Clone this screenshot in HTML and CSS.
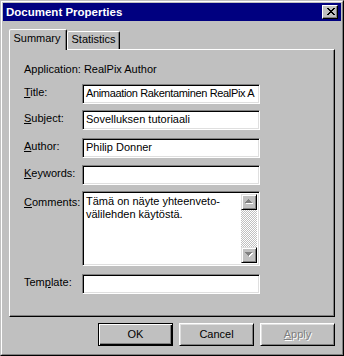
FILE: index.html
```html
<!DOCTYPE html>
<html>
<head>
<meta charset="utf-8">
<link rel="stylesheet" href="styles.css">
</head>
<body>
<div class="window">
  <div class="frame">
    <div class="titlebar">
      <span class="title">Document Properties</span>
      <div class="close">
        <svg width="8" height="7" viewBox="0 0 8 7" shape-rendering="crispEdges"><path fill="#000" d="M0 0h2v1H0zM6 0h2v1H6zM1 1h2v1H1zM5 1h2v1H5zM2 2h4v1H2zM3 3h2v1H3zM2 4h4v1H2zM1 5h2v1H1zM5 5h2v1H5zM0 6h2v1H0zM6 6h2v1H6z"/></svg>
      </div>
    </div>
    <div class="body">
      <div class="tabs">
        <div class="tab active">Summary</div>
        <div class="tab">Statistics</div>
      </div>
      <div class="panel">
        <div class="app">Application: RealPix Author</div>
        <div class="row r-title">
          <span class="label"><u>T</u>itle:</span>
          <div class="field tight">Animaation Rakentaminen RealPix A</div>
        </div>
        <div class="row r-subject">
          <span class="label"><u>S</u>ubject:</span>
          <div class="field">Sovelluksen tutoriaali</div>
        </div>
        <div class="row r-author">
          <span class="label"><u>A</u>uthor:</span>
          <div class="field">Philip Donner</div>
        </div>
        <div class="row r-keywords">
          <span class="label"><u>K</u>eywords:</span>
          <div class="field"></div>
        </div>
        <div class="row r-comments">
          <span class="label label-comments"><u>C</u>omments:</span>
          <div class="field memo">
            <div class="memo-text">Tämä on näyte yhteenveto-<br>välilehden käytöstä.</div>
            <div class="scrollbar">
              <div class="sbtn">
                <svg width="9" height="6" viewBox="0 0 9 6" shape-rendering="crispEdges"><path fill="#fff" d="M4 1h1v1h1v1h1v1h1v1H1V4h1V3h1V2h1z"/><path fill="#808080" d="M3 0h1v1h1v1h1v1h1v1H0V3h1V2h1V1h1z"/></svg>
              </div>
              <div class="track"></div>
              <div class="sbtn">
                <svg width="9" height="6" viewBox="0 0 9 6" shape-rendering="crispEdges"><path fill="#fff" d="M1 1h7v1H7v1H6v1H5v1H4V4H3V3H2V2H1z"/><path fill="#808080" d="M0 0h7v1H6v1H5v1H4v1H3V3H2V2H1V1H0z"/></svg>
              </div>
            </div>
          </div>
        </div>
        <div class="row r-template">
          <span class="label">Tem<u>p</u>late:</span>
          <div class="field"></div>
        </div>
      </div>
      <div class="buttons">
        <div class="btn default">OK</div>
        <div class="btn">Cancel</div>
        <div class="btn disabled"><u>A</u>pply</div>
      </div>
    </div>
  </div>
</div>
</body>
</html>
```

FILE: styles.css
```css
html, body {
  margin: 0;
  padding: 0;
  background: #c0c0c0;
}

body {
  font-family: "Liberation Sans", Arial, sans-serif;
  font-size: 11px;
  line-height: 13px;
  color: #000;
}

.window {
  width: 344px;
  height: 356px;
  box-sizing: border-box;
  border: 1px solid;
  border-color: #c0c0c0 #000 #000 #c0c0c0;
  background: #c0c0c0;
}

.frame {
  height: 100%;
  box-sizing: border-box;
  border: 1px solid;
  border-color: #fff #808080 #808080 #fff;
  padding: 1px;
  display: flex;
  flex-direction: column;
}

.titlebar {
  height: 18px;
  background: #000080;
  display: flex;
  align-items: center;
  justify-content: space-between;
  padding: 0 3px 0 3px;
}

.title {
  color: #fff;
  font-weight: bold;
  font-size: 11.5px;
  line-height: 14px;
}

.close {
  width: 16px;
  height: 14px;
  box-sizing: border-box;
  background: #c0c0c0;
  border: 1px solid;
  border-color: #fff #000 #000 #fff;
  box-shadow: inset -1px -1px #808080;
  display: flex;
  justify-content: center;
  align-items: center;
  padding: 0 0 1px 1px;
}

.close svg {
  display: block;
}

.body {
  flex: 1;
  display: flex;
  flex-direction: column;
  padding: 8px 6px 7px 6px;
}

.tabs {
  height: 20px;
  display: flex;
  align-items: flex-end;
}

.tab {
  box-sizing: border-box;
  border: 1px solid;
  border-bottom: none;
  border-color: #fff #000 transparent #fff;
  border-radius: 2px 2px 0 0;
  box-shadow: inset -1px 0 #808080;
  background: #c0c0c0;
  text-align: center;
}

.tab.active {
  width: 58px;
  height: 21px;
  margin-bottom: -1px;
  padding-top: 2px;
  padding-right: 2px;
  position: relative;
  z-index: 1;
}

.tab:not(.active) {
  width: 53px;
  height: 18px;
  padding-top: 1px;
}

.panel {
  height: 268px;
  box-sizing: border-box;
  border: 1px solid;
  border-color: #fff #000 #000 #fff;
  box-shadow: inset -1px -1px #808080;
  padding: 13px 0 0 14px;
  display: flex;
  flex-direction: column;
}

.app {
  height: 13px;
}

.row {
  display: flex;
}

.r-title { margin-top: 8px; }
.r-subject { margin-top: 6px; }
.r-author { margin-top: 8px; }
.r-keywords { margin-top: 7px; }
.r-comments { margin-top: 6px; }
.r-template { margin-top: 8px; }

.label {
  width: 58px;
  padding-top: 2px;
}

.label-comments {
  padding-top: 5px;
}

.field {
  width: 178px;
  height: 20px;
  box-sizing: border-box;
  border: 1px solid;
  border-color: #808080 #fff #fff #808080;
  box-shadow: inset 1px 1px #000, inset -1px -1px #dfdfdf;
  background: #fff;
  padding: 2px 2px 0 3px;
  white-space: nowrap;
  overflow: hidden;
}

.field.tight {
  letter-spacing: -0.35px;
  padding-right: 0;
}

.memo {
  height: 75px;
  padding: 2px 2px 2px 3px;
  display: flex;
  white-space: normal;
}

.memo-text {
  flex: 1;
  padding-top: 1px;
}

.scrollbar {
  width: 16px;
  display: flex;
  flex-direction: column;
}

.sbtn {
  height: 16px;
  box-sizing: border-box;
  background: #c0c0c0;
  border: 1px solid;
  border-color: #dfdfdf #000 #000 #dfdfdf;
  box-shadow: inset 1px 1px #fff, inset -1px -1px #808080;
  display: flex;
  justify-content: center;
  align-items: center;
}

.sbtn svg {
  display: block;
}

.track {
  flex: 1;
  background: repeating-conic-gradient(#fff 0 25%, #c0c0c0 0 50%) 0 0 / 2px 2px;
}

.buttons {
  margin-top: 6px;
  display: flex;
  justify-content: flex-end;
  gap: 6px;
}

.btn {
  width: 75px;
  height: 23px;
  box-sizing: border-box;
  border: 1px solid;
  border-color: #fff #000 #000 #fff;
  box-shadow: inset 1px 1px #dfdfdf, inset -1px -1px #808080;
  display: flex;
  justify-content: center;
  align-items: center;
}

.btn.default {
  border-color: #000;
  box-shadow: inset 1px 1px #fff, inset -1px -1px #000, inset -2px -2px #808080;
}

.btn.disabled {
  color: #808080;
  text-shadow: 1px 1px 0 #fff;
}
```
